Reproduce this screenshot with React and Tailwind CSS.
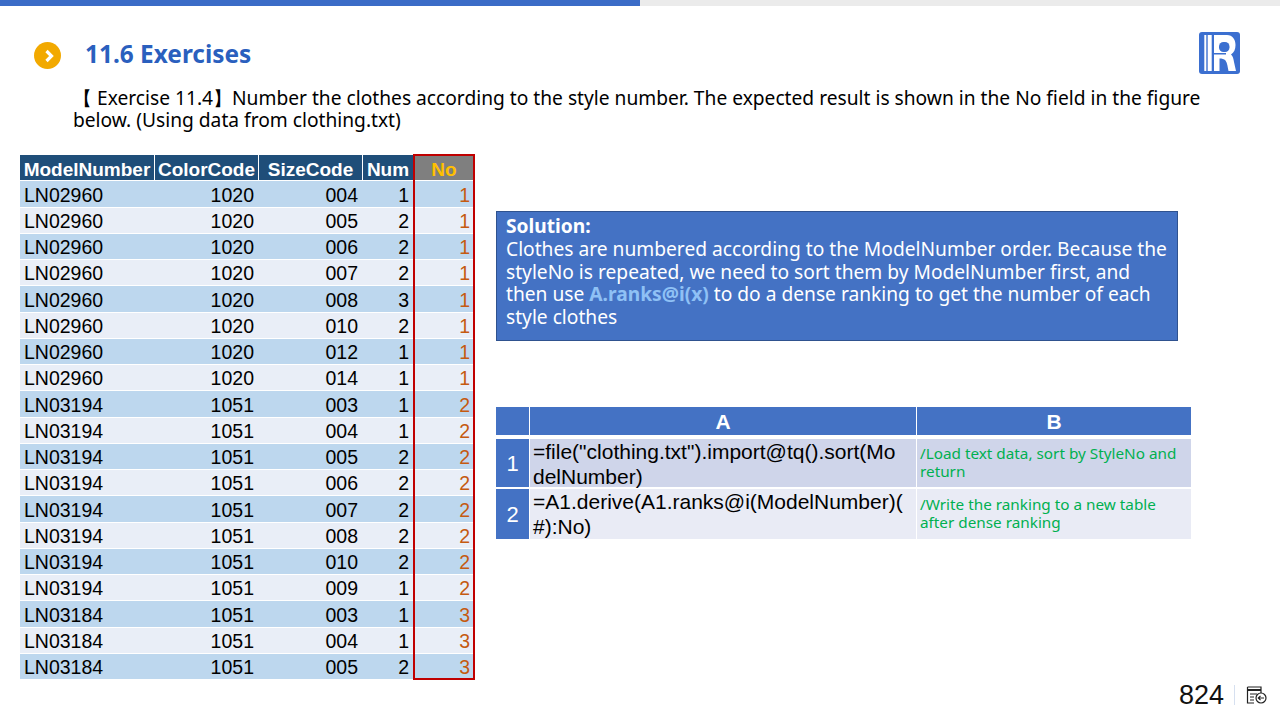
import React from "react";

const rows = [
  ["LN02960", "1020", "004", 1, 1],
  ["LN02960", "1020", "005", 2, 1],
  ["LN02960", "1020", "006", 2, 1],
  ["LN02960", "1020", "007", 2, 1],
  ["LN02960", "1020", "008", 3, 1],
  ["LN02960", "1020", "010", 2, 1],
  ["LN02960", "1020", "012", 1, 1],
  ["LN02960", "1020", "014", 1, 1],
  ["LN03194", "1051", "003", 1, 2],
  ["LN03194", "1051", "004", 1, 2],
  ["LN03194", "1051", "005", 2, 2],
  ["LN03194", "1051", "006", 2, 2],
  ["LN03194", "1051", "007", 2, 2],
  ["LN03194", "1051", "008", 2, 2],
  ["LN03194", "1051", "010", 2, 2],
  ["LN03194", "1051", "009", 1, 2],
  ["LN03184", "1051", "003", 1, 3],
  ["LN03184", "1051", "004", 1, 3],
  ["LN03184", "1051", "005", 2, 3],
];

const cols = "grid grid-cols-[134px_103px_103px_50px_60px] gap-x-[1px]";

const Logo = () => (
  <svg width="41" height="42" viewBox="0 0 41 42">
    <rect width="41" height="42" rx="3" fill="#3b6fd0" />
    <rect x="5.300" y="3" width="2" height="36" fill="#fff" />
    <rect x="8.700" y="3" width="4" height="36" fill="#fff" />
    <path
      d="M15 3H28C33.500 3 36.500 7.500 36.500 13C36.500 17.500 35 20.500 32 22.500C34 24 34.500 27 35 30L37 39H29.500C28.500 35 28.500 31 26.500 28.500C25 27 23 26.500 20.500 26.500V39H15Z"
      fill="#fff"
    />
    <rect x="20" y="10" width="10.500" height="10" rx="4.500" fill="#3b6fd0" />
    <rect x="15" y="21" width="12" height="1.500" fill="#3b6fd0" />
  </svg>
);

const FooterIcon = () => (
  <svg width="21" height="18" viewBox="0 0 21 18" fill="none" stroke="#222" strokeWidth="1.2">
    <path d="M1.500 1H15V7M1.500 1V17H8" />
    <path d="M1.500 4H15" strokeWidth="2" />
    <path d="M4 8H11M4 11H8M4 14H8" />
    <circle cx="15" cy="12" r="5" />
    <path d="M18 12H12.500M14.500 9.800L12.300 12L14.500 14.200" />
  </svg>
);

export default function App() {
  return (
    <div className="w-[1280px] h-[720px] bg-white overflow-hidden flex flex-col font-['Noto_Sans',sans-serif]">
      <div className="flex h-[6px] shrink-0">
        <div className="w-[640px] bg-[#3b6cc7]" />
        <div className="flex-1 bg-[#ebebeb]" />
      </div>

      {/* Title */}
      <div className="flex items-start pl-[34px] pr-[40px] pt-[26px] h-[70px] shrink-0">
        <div className="mt-[10px] w-[27px] h-[27px] rounded-full bg-[#f2a900] flex items-center justify-center">
          <svg className="ml-[2px]" width="12" height="14" viewBox="0 0 12 14" fill="none" stroke="#fff" strokeWidth="3.200">
            <path d="M3.500 2L8.500 7L3.500 12" />
          </svg>
        </div>
        <h1 className="ml-[24px] mt-[4px] text-[24.400px] leading-[36px] font-bold text-[#2a5fbe]">11.6 Exercises</h1>
        <div className="ml-auto">
          <Logo />
        </div>
      </div>

      <p className="ml-[73px] mt-[11px] w-[1135px] h-[66px] shrink-0 text-[19.200px] leading-[22px] text-black">
        【 Exercise 11.4】Number the clothes according to the style number. The expected result is shown in the No field in the figure below. (Using data from clothing.txt)
      </p>

      <div className="flex pl-[20px]">
        {/* Clothing table */}
        <div className="relative w-[454px] h-[524px] mt-[2px] flex flex-col gap-y-[1px] font-['Liberation_Sans',sans-serif] text-[19.500px] leading-none shrink-0">
          <div className={`${cols} flex-1 min-h-0 text-white font-bold text-[19px] text-center`}>
            {["ModelNumber", "ColorCode", "SizeCode", "Num"].map((h) => (
              <div key={h} className="bg-[#1f4e79] pt-[3px] flex items-center justify-center whitespace-nowrap">{h}</div>
            ))}
            <div className="bg-[#7f7f7f] pt-[3px] text-[#ffc000] flex items-center justify-center">No</div>
          </div>
          {rows.map((r, i) => (
            <div key={i} className={`${cols} flex-1 min-h-0 text-black ${i % 2 === 0 ? "bg-[#bdd7ee]" : "bg-[#e9eef7]"}`}>
              <div className="flex items-center pt-[3px] pl-[4px]">{r[0]}</div>
              <div className="flex items-center justify-end pt-[3px] pr-[4px]">{r[1]}</div>
              <div className="flex items-center justify-end pt-[3px] pr-[4px]">{r[2]}</div>
              <div className="flex items-center justify-end pt-[3px] pr-[4px]">{r[3]}</div>
              <div className="flex items-center justify-end pt-[3px] pr-[4px] text-[#c55a11]">{r[4]}</div>
            </div>
          ))}
          <div className="absolute left-[393px] top-[-1px] w-[62px] h-[526px] border-[2px] border-[#c00000]" />
        </div>

        {/* Right column */}
        <div className="ml-[22px] flex-1 flex flex-col">
          <div className="mt-[58px] w-[682px] h-[130px] bg-[#4472c4] border border-[#2f528f] px-[9px] pt-[3px] text-white text-[19.200px] leading-[22.800px]">
            <div className="font-bold">Solution:</div>
            <div>
              Clothes are numbered according to the ModelNumber order. Because the styleNo is repeated, we need to sort them by ModelNumber first, and then use <span className="font-bold text-[#8fc1f5]">A.ranks@i(x)</span> to do a dense ranking to get the number of each style clothes
            </div>
          </div>

          <div className="mt-[66px] w-[695px] grid grid-cols-[33px_386px_1fr] gap-x-[1px] font-['Liberation_Sans',sans-serif]">
            <div className="h-[28px] bg-[#4472c4]" />
            <div className="h-[28px] pt-[2px] bg-[#4472c4] text-white font-bold text-[21px] flex items-center justify-center">A</div>
            <div className="h-[28px] pt-[2px] bg-[#4472c4] text-white font-bold text-[21px] flex items-center justify-center">B</div>

            <div className="mt-[4px] h-[48px] bg-[#4472c4] text-white text-[22px] flex items-center justify-center">1</div>
            <div className="mt-[4px] h-[48px] bg-[#cfd5ea] text-black text-[21px] leading-[25px] pl-[3px] whitespace-nowrap">=file("clothing.txt").import@tq().sort(Mo<br />delNumber)</div>
            <div className="mt-[4px] h-[48px] pb-[2px] bg-[#cfd5ea] text-[#00b050] text-[15.300px] leading-[18.500px] pl-[3px] flex items-center font-['Noto_Sans',sans-serif]">/Load text data, sort by StyleNo and return</div>

            <div className="mt-[2px] h-[50px] bg-[#4472c4] text-white text-[22px] flex items-center justify-center">2</div>
            <div className="mt-[2px] h-[50px] bg-[#e9ebf5] text-black text-[21px] leading-[25px] pl-[3px] whitespace-nowrap">=A1.derive(A1.ranks@i(ModelNumber)(<br />#):No)</div>
            <div className="mt-[2px] h-[50px] pb-[2px] bg-[#e9ebf5] text-[#00b050] text-[15.300px] leading-[18.500px] pl-[3px] flex items-center font-['Noto_Sans',sans-serif]">
              <span className="w-[250px]">/Write the ranking to a new table after dense ranking</span>
            </div>
          </div>
        </div>
      </div>

      {/* Footer */}
      <div className="mt-auto mb-[10px] flex items-center justify-end pr-[13px] font-['Liberation_Sans',sans-serif]">
        <span className="text-[27px] leading-[30px] text-[#111]">824</span>
        <span className="ml-[10px] w-px h-[20px] bg-[#d6e0f0]" />
        <span className="ml-[11px]"><FooterIcon /></span>
      </div>
    </div>
  );
}
